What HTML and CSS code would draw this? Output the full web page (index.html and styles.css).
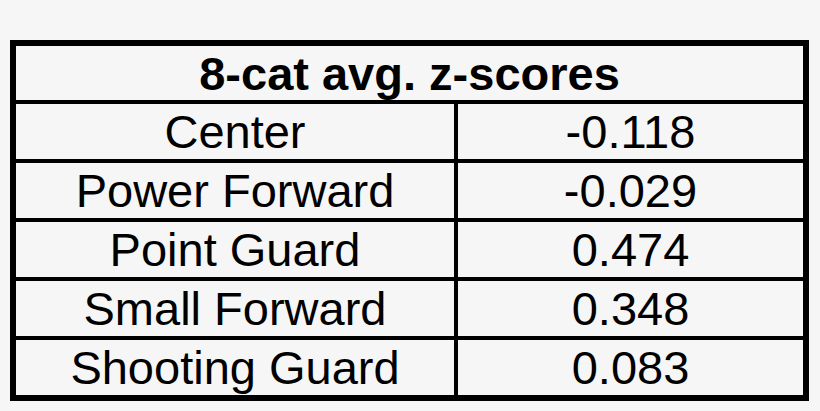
FILE: index.html
```html
<!DOCTYPE html>
<html lang="en">
<head>
<meta charset="utf-8">
<title>8-cat avg. z-scores</title>
<link rel="stylesheet" href="styles.css">
</head>
<body>
<div class="table">
  <div class="cell head">8-cat avg. z-scores</div>
  <div class="cell">Center</div><div class="cell">-0.118</div>
  <div class="cell">Power Forward</div><div class="cell">-0.029</div>
  <div class="cell">Point Guard</div><div class="cell">0.474</div>
  <div class="cell">Small Forward</div><div class="cell">0.348</div>
  <div class="cell">Shooting Guard</div><div class="cell">0.083</div>
</div>
</body>
</html>
```
FILE: styles.css
```css
html, body {
  margin: 0;
  padding: 0;
  background: #f6f6f6;
}
body {
  padding: 40px 0 0 10px;
  font-family: "Liberation Sans", Arial, sans-serif;
  color: #000;
}
.table {
  width: 787px;
  border: 6px solid #000;
  background: #000;
  display: grid;
  grid-template-columns: 438px 345px;
  grid-template-rows: 54px repeat(5, 55px);
  gap: 4px;
}
.cell {
  background: #f6f6f6;
  display: flex;
  align-items: center;
  justify-content: center;
  font-size: 47px;
  white-space: nowrap;
}
.head {
  grid-column: 1 / 3;
  font-weight: bold;
}
```
